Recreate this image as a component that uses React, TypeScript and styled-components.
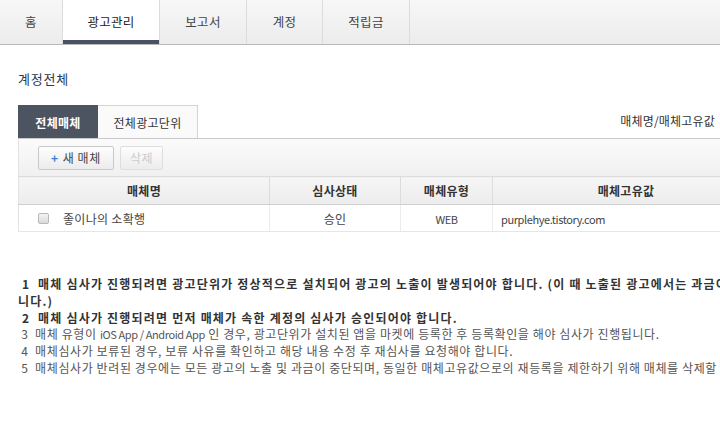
import React from "react";
import styled, { createGlobalStyle } from "styled-components";

const Global = createGlobalStyle`
  html, body { margin: 0; padding: 0; background: #fff; overflow: hidden; }
  body { width: 720px; font-family: "Noto Sans CJK KR", "Noto Sans", sans-serif; color: #333; }
  * { box-sizing: border-box; }
`;

const Page = styled.div`
  width: 1000px;
`;

const Nav = styled.nav`
  display: flex;
  height: 45px;
  background: linear-gradient(#f7f7f7, #ececec);
  border-bottom: 1px solid #b9b9b9;
`;

const NavItem = styled.div<{ $w: number; $active?: boolean }>`
  width: ${(p) => p.$w}px;
  display: flex;
  align-items: center;
  justify-content: center;
  font-size: 12.5px;
  letter-spacing: 0.3px;
  color: ${(p) => (p.$active ? "#222" : "#444")};
  border-right: 1px solid #dcdcdc;
  background: ${(p) => (p.$active ? "#fff" : "transparent")};
  box-shadow: ${(p) => (p.$active ? "inset 0 -4px 0 #4a5261" : "none")};
  padding-bottom: 1px;
`;

const Content = styled.div`
  padding: 0 0 0 18px;
`;

const Title = styled.h2`
  margin: 0;
  padding-top: 25px;
  height: 60px;
  font-size: 13px;
  letter-spacing: 0.8px;
  font-weight: normal;
  color: #2b3a4d;
  line-height: 18px;
`;

const TabBar = styled.div`
  display: flex;
  align-items: flex-end;
  height: 33px;
  width: 697px;
`;

const Tab = styled.div<{ $w: number; $active?: boolean }>`
  width: ${(p) => p.$w}px;
  height: 33px;
  display: flex;
  align-items: center;
  justify-content: center;
  font-size: 12px;
  letter-spacing: 0.3px;
  font-weight: ${(p) => (p.$active ? "bold" : "normal")};
  color: ${(p) => (p.$active ? "#fff" : "#333")};
  background: ${(p) => (p.$active ? "#4c5462" : "#fafafa")};
  border: 1px solid ${(p) => (p.$active ? "#4c5462" : "#d4d4d4")};
  border-bottom: none;
  border-left: ${(p) => (p.$active ? "1px solid #4c5462" : "none")};
`;

const SearchLabel = styled.div`
  margin-left: auto;
  align-self: center;
  font-size: 12px;
  letter-spacing: 0.2px;
  color: #333;
  padding-bottom: 2px;
`;

const Toolbar = styled.div`
  display: flex;
  align-items: center;
  gap: 6px;
  height: 38px;
  padding-left: 19px;
  border-top: 1px solid #c8c8c8;
  border-left: 1px solid #e2e2e2;
  background: linear-gradient(#fbfbfb, #f0f0f0);
`;

const Button = styled.button<{ $disabled?: boolean }>`
  height: 24px;
  padding: 0 ${(p) => (p.$disabled ? "9px" : "12px")};
  font-family: inherit;
  font-size: 12px;
  letter-spacing: 0.6px;
  color: ${(p) => (p.$disabled ? "#ccc" : "#444")};
  border: 1px solid ${(p) => (p.$disabled ? "#dedede" : "#c9c9c9")};
  border-radius: 2px;
  background: linear-gradient(#fdfdfd, #ececec);
  display: flex;
  align-items: center;
  gap: 4px;
`;

const Plus = styled.span`
  color: #3b7fd3;
  font-weight: bold;
  font-size: 12px;
`;

const Table = styled.table`
  border-collapse: collapse;
  table-layout: fixed;
  width: 742px;
  font-size: 12px;
  border-left: 1px solid #e2e2e2;
`;

const Th = styled.th<{ $w?: number }>`
  width: ${(p) => (p.$w ? `${p.$w}px` : "auto")};
  height: 28px;
  font-weight: 600;
  letter-spacing: 0.3px;
  color: #333;
  background: linear-gradient(#f6f6f6, #ececec);
  border-top: 1px solid #dcdcdc;
  border-bottom: 1px solid #cfcfcf;
  border-right: 1px solid #dcdcdc;
  padding: 0;
`;

const Td = styled.td<{ $align?: string; $pad?: number }>`
  height: 27px;
  text-align: ${(p) => p.$align || "center"};
  color: #444;
  letter-spacing: 0.3px;
  border-bottom: 1px solid #e6e6e6;
  border-right: 1px solid #ececec;
  padding: 0 0 0 ${(p) => (p.$pad !== undefined ? p.$pad : 0)}px;
`;

const NameCell = styled.div`
  display: flex;
  align-items: center;
  gap: 14px;
  padding-left: 19px;
`;

const Check = styled.span`
  width: 11px;
  height: 11px;
  border: 1px solid #b9b9b9;
  border-radius: 2px;
  background: linear-gradient(#f4f4f4, #d9d9d9);
`;

const Latin = styled.span`
  font-size: 11px;
  letter-spacing: -0.4px;
`;

const Notes = styled.div`
  margin-top: 44px;
  font-size: 12px;
  line-height: 16.8px;
`;

const Note = styled.div<{ $strong?: boolean }>`
  white-space: nowrap;
  color: ${(p) => (p.$strong ? "#333" : "#555")};
  font-weight: ${(p) => (p.$strong ? "bold" : "normal")};
  letter-spacing: ${(p) => (p.$strong ? "1.2px" : "0.6px")};
`;

export default function App() {
  return (
    <Page>
      <Global />
      <Nav>
        <NavItem $w={63}>홈</NavItem>
        <NavItem $w={97} $active>광고관리</NavItem>
        <NavItem $w={87}>보고서</NavItem>
        <NavItem $w={76}>계정</NavItem>
        <NavItem $w={87}>적립금</NavItem>
      </Nav>
      <Content>
        <Title>계정전체</Title>
        <TabBar>
          <Tab $w={80} $active>전체매체</Tab>
          <Tab $w={100}>전체광고단위</Tab>
          <SearchLabel>매체명/매체고유값</SearchLabel>
        </TabBar>
        <Toolbar>
          <Button><Plus>+</Plus> 새 매체</Button>
          <Button $disabled>삭제</Button>
        </Toolbar>
        <Table>
          <thead>
            <tr>
              <Th $w={251}>매체명</Th>
              <Th $w={131}>심사상태</Th>
              <Th $w={92}>매체유형</Th>
              <Th>매체고유값</Th>
            </tr>
          </thead>
          <tbody>
            <tr>
              <Td $align="left">
                <NameCell>
                  <Check />
                  좋이나의 소확행
                </NameCell>
              </Td>
              <Td>승인</Td>
              <Td><Latin>WEB</Latin></Td>
              <Td $align="left" $pad={8}><Latin>purplehye.tistory.com</Latin></Td>
            </tr>
          </tbody>
        </Table>
        <Notes>
          <Note $strong>&nbsp;1&nbsp; 매체 심사가 진행되려면 광고단위가 정상적으로 설치되어 광고의 노출이 발생되어야 합니다. (이 때 노출된 광고에서는 과금이 발생하지 않습</Note>
          <Note $strong>니다.)</Note>
          <Note $strong>&nbsp;2&nbsp; 매체 심사가 진행되려면 먼저 매체가 속한 계정의 심사가 승인되어야 합니다.</Note>
          <Note>&nbsp;3&nbsp; 매체 유형이 <Latin>iOS App / Android App</Latin> 인 경우, 광고단위가 설치된 앱을 마켓에 등록한 후 등록확인을 해야 심사가 진행됩니다.</Note>
          <Note>&nbsp;4&nbsp; 매체심사가 보류된 경우, 보류 사유를 확인하고 해당 내용 수정 후 재심사를 요청해야 합니다.</Note>
          <Note>&nbsp;5&nbsp; 매체심사가 반려된 경우에는 모든 광고의 노출 및 과금이 중단되며, 동일한 매체고유값으로의 재등록을 제한하기 위해 매체를 삭제할 수 없습니다.</Note>
        </Notes>
      </Content>
    </Page>
  );
}
